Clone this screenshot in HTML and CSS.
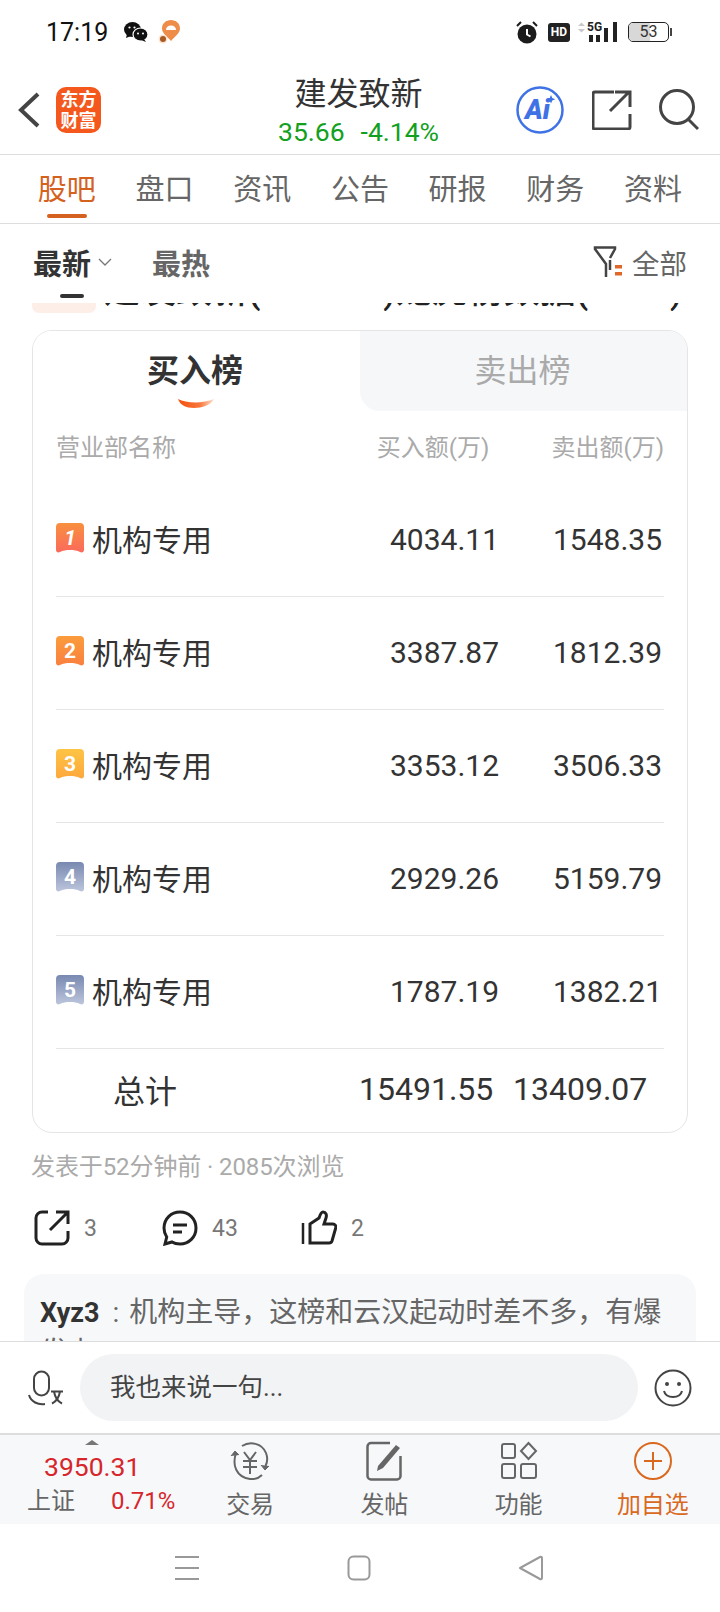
FILE: index.html
```html
<!DOCTYPE html>
<html lang="zh-CN">
<head>
    <meta charset="UTF-8">
    <meta name="viewport" content="width=device-width, initial-scale=1.0">
    <title>建发致新 - 股吧</title>
    <link rel="stylesheet" href="styles.css">
</head>
<body>
    <svg class="defs" width="0" height="0">
        <defs>
            <linearGradient id="rank1" x1="0" y1="0" x2="0" y2="1"><stop offset="0" stop-color="#f8903e"/><stop offset="1" stop-color="#fb6a5c"/></linearGradient>
            <linearGradient id="rank2" x1="0" y1="0" x2="0" y2="1"><stop offset="0" stop-color="#fb9c3c"/><stop offset="1" stop-color="#f9803f"/></linearGradient>
            <linearGradient id="rank3" x1="0" y1="0" x2="0" y2="1"><stop offset="0" stop-color="#fdc445"/><stop offset="1" stop-color="#fda83c"/></linearGradient>
            <linearGradient id="rank4" x1="0" y1="0" x2="0" y2="1"><stop offset="0" stop-color="#7888b0"/><stop offset="1" stop-color="#bcc5dc"/></linearGradient>
            <linearGradient id="smile" x1="0" y1="0" x2="1" y2="0"><stop offset="0" stop-color="#f4500c"/><stop offset="0.6" stop-color="#f8763a"/><stop offset="1" stop-color="#ffe0cc"/></linearGradient>
            <path id="ribbon" d="M4 0H24a4 4 0 0 1 4 4V27c0 2-2 3-4 2-3-1.5-6-2-10-2s-7 .5-10 2c-2 1-4 0-4-2V4a4 4 0 0 1 4-4z"/>
        </defs>
    </svg>

    <div class="status-bar">
        <span class="clock">17:19</span>
        <svg class="st-wechat" width="24" height="20" viewBox="0 0 24 20">
            <ellipse cx="8.500" cy="7.500" rx="8.500" ry="7.500" fill="#111"/>
            <path d="M3 12l-1 4 5-2z" fill="#111"/>
            <ellipse cx="16.500" cy="12.500" rx="7.500" ry="6.500" fill="#111" stroke="#fff" stroke-width="1.200"/>
            <path d="M20 17l2 3-5-2z" fill="#111"/>
            <circle cx="5.500" cy="5.500" r="1.100" fill="#fff"/>
            <circle cx="10.500" cy="5.500" r="1.100" fill="#fff"/>
            <circle cx="14" cy="11.500" r="1" fill="#fff"/>
            <circle cx="19" cy="11.500" r="1" fill="#fff"/>
        </svg>
        <svg class="st-map" width="22" height="24" viewBox="0 0 22 24">
            <path d="M13 0c5 0 9 3.500 9 8.500 0 4.500-5 8-9 12.500-4-4.500-9-8-9-12.500C4 3.500 8 0 13 0z" fill="#ee8c4a"/>
            <path d="M8 10c0-3 2-4.500 5-4.500s5 1.500 5 4.500z" fill="#fff"/>
            <circle cx="5" cy="19" r="4.500" fill="#fbe3d2"/>
            <circle cx="5" cy="19" r="3" fill="#a85a24"/>
        </svg>
        <span class="status-space"></span>
        <svg class="st-alarm" width="22" height="23" viewBox="0 0 22 23">
            <circle cx="11" cy="13" r="9.500" fill="#1c1c1c"/>
            <path d="M11 8v5.500l3.500 2" fill="none" stroke="#fff" stroke-width="2"/>
            <path d="M1 5l4-4M21 5l-4-4" stroke="#1c1c1c" stroke-width="2"/>
        </svg>
        <span class="st-hd">HD</span>
        <svg class="st-signal" width="40" height="24" viewBox="0 0 40 24">
            <path d="M0 6l3.500-3.500L7 6zM0 9l3.500 3.500L7 9z" fill="#c8c8c8"/>
            <text x="9" y="11" class="st-5g">5G</text>
            <rect x="11" y="15" width="4" height="7" fill="#222"/>
            <rect x="18" y="15" width="4" height="7" fill="#222"/>
            <rect x="26" y="8" width="4" height="14" fill="#222"/>
            <rect x="35" y="2" width="4" height="20" fill="#222"/>
        </svg>
        <div class="st-battery"><span class="st-level"></span><span class="st-num">53</span></div>
        <span class="st-cap"></span>
    </div>

    <header class="top-bar">
        <div class="top-left">
            <svg width="22" height="36" viewBox="0 0 22 36"><path d="M20 2L3 18l17 16" fill="none" stroke="#444" stroke-width="4"/></svg>
            <div class="app-logo">东方<br>财富</div>
        </div>
        <div class="top-title">
            <div class="stock-name">建发致新</div>
            <div class="stock-price"><span>35.66</span><span>-4.14%</span></div>
        </div>
        <div class="top-right">
            <svg width="50" height="50" viewBox="0 0 50 50">
                <circle cx="25" cy="25" r="22.500" fill="none" stroke="#3f72e4" stroke-width="2.500"/>
                <text x="10" y="34" class="ai-text">Ai</text>
                <path d="M36 10l1.300 3 3 1.300-3 1.300-1.300 3-1.300-3-3-1.300 3-1.300z" fill="#3f72e4"/>
            </svg>
            <svg width="40" height="40" viewBox="0 0 40 40">
                <path d="M22 2H3a2 2 0 0 0-2 2V37a2 2 0 0 0 2 2H36a2 2 0 0 0 2-2V24" fill="none" stroke="#444" stroke-width="3"/>
                <path d="M18 21L37 2M23 2H38V17" fill="none" stroke="#444" stroke-width="3"/>
            </svg>
            <svg width="40" height="42" viewBox="0 0 40 42">
                <circle cx="18" cy="18" r="16.500" fill="none" stroke="#444" stroke-width="3"/>
                <path d="M29 30l10 10" stroke="#444" stroke-width="3"/>
            </svg>
        </div>
    </header>

    <nav class="tabs">
        <a class="tab active">股吧</a>
        <a class="tab">盘口</a>
        <a class="tab">资讯</a>
        <a class="tab">公告</a>
        <a class="tab">研报</a>
        <a class="tab">财务</a>
        <a class="tab">资料</a>
    </nav>

    <div class="sort-bar">
        <span class="sort-item current">最新</span>
        <svg class="sort-arrow" width="14" height="8" viewBox="0 0 14 8"><path d="M1 1l6 6 6-6" fill="none" stroke="#777" stroke-width="1.300"/></svg>
        <span class="sort-item">最热</span>
        <span class="sort-space"></span>
        <svg width="30" height="32" viewBox="0 0 30 32">
            <path d="M13 31V18L2 3V1.500H22V3L17 12" fill="none" stroke="#444" stroke-width="2.500"/>
            <path d="M17 24V14" stroke="#444" stroke-width="2.500"/>
            <rect x="22" y="19" width="7" height="3.500" fill="#e0662a"/>
            <rect x="22" y="26" width="7" height="3.500" fill="#e0662a"/>
        </svg>
        <span class="sort-all">全部</span>
    </div>

    <main class="feed">
        <div class="clip-strip">
            <span class="clip-dash"></span>
            <div class="clip-row">
                <span class="clip-tag"></span>
                <div class="clip-text"><span>建发致新(301584)龙虎榜数据(1017)</span></div>
            </div>
        </div>

        <section class="board">
            <div class="board-tabs">
                <div class="board-tab on">
                    买入榜
                    <svg class="board-smile" width="36" height="10" viewBox="0 0 36 10"><path d="M0 1C8 5 24 6 36 1 33 7 24 10 16 10 8 10 2 7 0 1z" fill="url(#smile)"/></svg>
                </div>
                <div class="board-tab off">卖出榜</div>
            </div>
            <div class="board-head">
                <span class="head-name">营业部名称</span>
                <span>买入额(万)</span>
                <span>卖出额(万)</span>
            </div>

            <div class="rank-row">
                <div class="rank-name">
                    <svg class="rank-badge" width="28" height="30" viewBox="0 0 28 30"><use href="#ribbon" fill="url(#rank1)"/><text x="14" y="22" class="badge-num italic">1</text></svg>
                    机构专用
                </div>
                <span>4034.11</span>
                <span>1548.35</span>
            </div>
            <div class="rank-row">
                <div class="rank-name">
                    <svg class="rank-badge" width="28" height="30" viewBox="0 0 28 30"><use href="#ribbon" fill="url(#rank2)"/><text x="14" y="22" class="badge-num">2</text></svg>
                    机构专用
                </div>
                <span>3387.87</span>
                <span>1812.39</span>
            </div>
            <div class="rank-row">
                <div class="rank-name">
                    <svg class="rank-badge" width="28" height="30" viewBox="0 0 28 30"><use href="#ribbon" fill="url(#rank3)"/><text x="14" y="22" class="badge-num">3</text></svg>
                    机构专用
                </div>
                <span>3353.12</span>
                <span>3506.33</span>
            </div>
            <div class="rank-row">
                <div class="rank-name">
                    <svg class="rank-badge" width="28" height="30" viewBox="0 0 28 30"><use href="#ribbon" fill="url(#rank4)"/><text x="14" y="22" class="badge-num">4</text></svg>
                    机构专用
                </div>
                <span>2929.26</span>
                <span>5159.79</span>
            </div>
            <div class="rank-row">
                <div class="rank-name">
                    <svg class="rank-badge" width="28" height="30" viewBox="0 0 28 30"><use href="#ribbon" fill="url(#rank4)"/><text x="14" y="22" class="badge-num">5</text></svg>
                    机构专用
                </div>
                <span>1787.19</span>
                <span>1382.21</span>
            </div>
            <div class="total-row">
                <span class="total-label">总计</span>
                <span>15491.55</span>
                <span>13409.07</span>
            </div>
        </section>

        <p class="post-meta">发表于52分钟前 · 2085次浏览</p>

        <div class="post-actions">
            <div class="action a-share">
                <svg width="36" height="36" viewBox="0 0 36 36">
                    <path d="M14 2H8a6 6 0 0 0-6 6V28a6 6 0 0 0 6 6H28a6 6 0 0 0 6-6V21" fill="none" stroke="#222" stroke-width="3"/>
                    <path d="M16 20L33 3M22 2H34V14" fill="none" stroke="#222" stroke-width="3"/>
                </svg>
                <span>3</span>
            </div>
            <div class="action a-comment">
                <svg width="36" height="36" viewBox="0 0 36 36">
                    <path d="M18 2c9 0 16 7 16 16s-7 16-16 16c-3 0-6-.7-8-2L3 34l1.700-7C3 24.500 2 21.500 2 18 2 9 9 2 18 2z" fill="none" stroke="#222" stroke-width="3"/>
                    <path d="M11 15H25M11 22H20" stroke="#222" stroke-width="3"/>
                </svg>
                <span>43</span>
            </div>
            <div class="action a-like">
                <svg width="36" height="36" viewBox="0 0 36 36">
                    <path d="M2 13V34" stroke="#222" stroke-width="2.500"/>
                    <path d="M9 14L18 8c1-3 2-6 4-6 3 0 4 3 3 6l-2 6h9c2 0 3 2 3 3l-4 14c-.5 1.500-1.500 2-3 2H9z" fill="none" stroke="#222" stroke-width="3"/>
                </svg>
                <span>2</span>
            </div>
        </div>

        <div class="comment-box">
            <b>Xyz3</b><span class="colon">:</span>机构主导，这榜和云汉起动时差不多，有爆发力
        </div>
    </main>

    <div class="input-bar">
        <svg width="36" height="36" viewBox="0 0 36 36">
            <rect x="6" y="1.500" width="15" height="24" rx="7.500" fill="none" stroke="#444" stroke-width="2"/>
            <path d="M1 25c2 7 9 10 16 9" fill="none" stroke="#444" stroke-width="2"/>
            <path d="M23 21.500H35M26 21.500c1 6 4 10 8 12M32 21.500c-1 6-4 10-8 12" fill="none" stroke="#444" stroke-width="2"/>
        </svg>
        <div class="input-pill">我也来说一句...</div>
        <svg width="38" height="38" viewBox="0 0 38 38">
            <circle cx="19" cy="19" r="17.500" fill="none" stroke="#444" stroke-width="2"/>
            <circle cx="13" cy="15" r="2" fill="#444"/>
            <circle cx="25" cy="15" r="2" fill="#444"/>
            <path d="M10 22c2 8 16 8 18 0" fill="none" stroke="#444" stroke-width="2"/>
        </svg>
    </div>

    <div class="bottom-nav">
        <div class="index-box">
            <span class="index-up"></span>
            <div class="index-value">3950.31</div>
            <div class="index-line"><span>上证</span><span class="index-pct">0.71%</span></div>
        </div>
        <div class="nav-item">
            <svg width="44" height="40" viewBox="0 0 44 40">
                <path d="M8 12C4 24 8 36 22 38c5 .5 9-1 12-4M14 5c8-5 20-3 24 7 2 5 1 10-.5 13" fill="none" stroke="#666" stroke-width="2"/>
                <path d="M3 15l4-5 4 4M33 24l4 5 4-4" fill="#666" stroke="#666" stroke-width="1"/>
                <path d="M16 11l6 8 6-8M15 20H29M15 26H29M22 19V33" fill="none" stroke="#666" stroke-width="2"/>
            </svg>
            <span>交易</span>
        </div>
        <div class="nav-item">
            <svg width="40" height="40" viewBox="0 0 40 40">
                <path d="M26 2H7a3.500 3.500 0 0 0-3.500 3.500V35a3.500 3.500 0 0 0 3.500 3.500H33a3.500 3.500 0 0 0 3.500-3.500V15" fill="none" stroke="#666" stroke-width="2.500"/>
                <path d="M14 25L32 4l4 3-17 20-6 3z" fill="#666"/>
            </svg>
            <span>发帖</span>
        </div>
        <div class="nav-item">
            <svg width="38" height="40" viewBox="0 0 38 38">
                <rect x="2" y="2" width="13" height="14" rx="2" fill="none" stroke="#666" stroke-width="2"/>
                <rect x="2" y="22" width="13" height="14" rx="2" fill="none" stroke="#666" stroke-width="2"/>
                <rect x="21" y="22" width="15" height="14" rx="2" fill="none" stroke="#666" stroke-width="2"/>
                <path d="M28.500 1L36 9l-7.500 8L21 9z" fill="none" stroke="#666" stroke-width="2"/>
            </svg>
            <span>功能</span>
        </div>
        <div class="nav-item add">
            <svg width="40" height="40" viewBox="0 0 40 40">
                <circle cx="20" cy="20" r="18" fill="none" stroke="#d9691f" stroke-width="2"/>
                <path d="M20 11V29M11 20H29" stroke="#d9691f" stroke-width="2"/>
            </svg>
            <span>加自选</span>
        </div>
    </div>

    <div class="system-nav">
        <svg width="26" height="26" viewBox="0 0 26 26"><path d="M1 2H25M1 13H25M1 24H25" stroke="#999" stroke-width="2"/></svg>
        <svg width="24" height="26" viewBox="0 0 24 26"><rect x="1.500" y="1.500" width="21" height="23" rx="5" fill="none" stroke="#999" stroke-width="2"/></svg>
        <svg width="26" height="26" viewBox="0 0 26 26"><path d="M2 13L22 2c1-.5 2 0 2 1V23c0 1-1 1.500-2 1z" fill="none" stroke="#999" stroke-width="2" stroke-linejoin="round"/></svg>
    </div>
</body>
</html>
```

FILE: styles.css
```css
* {
    box-sizing: border-box;
}

html, body {
    margin: 0;
    height: 1612px;
    overflow: hidden;
}

body {
    display: flex;
    flex-direction: column;
    width: 720px;
    font-family: Roboto, "Noto Sans CJK SC", sans-serif;
    background-color: #fff;
    color: #333;
}

.defs {
    position: absolute;
}

/* status bar */
.status-bar {
    display: flex;
    align-items: center;
    flex: 0 0 64px;
    padding-left: 46px;
    padding-right: 48px;
    color: #111;
}

.clock {
    font-size: 25px;
    width: 78px;
}

.st-map {
    margin-left: 10px;
}

.status-space {
    flex: 1;
}

.st-hd {
    width: 22px;
    height: 19px;
    margin-left: 10px;
    border-radius: 3px;
    background-color: #222;
    color: #fff;
    font-size: 12px;
    font-weight: 700;
    line-height: 19px;
    text-align: center;
}

.st-signal {
    margin-left: 8px;
}

.st-5g {
    font-size: 12px;
    font-weight: 700;
    fill: #222;
}

.st-battery {
    position: relative;
    width: 41px;
    height: 20px;
    margin-left: 10px;
    border: 1.500px solid #222;
    border-radius: 5px;
    overflow: hidden;
}

.st-level {
    display: block;
    width: 53%;
    height: 100%;
    background-color: #d8d8d8;
}

.st-num {
    position: absolute;
    inset: 0;
    font-size: 16px;
    line-height: 18px;
    text-align: center;
    color: #333;
}

.st-cap {
    width: 2px;
    height: 8px;
    margin-left: 1px;
    background-color: #444;
}

/* header */
.top-bar {
    display: grid;
    grid-template-columns: 1fr auto 1fr;
    flex: 0 0 91px;
    padding-left: 18px;
    padding-right: 21px;
    border-bottom: 1px solid #ddd;
}

.top-left {
    display: flex;
    align-items: center;
    gap: 16px;
    padding-bottom: 2px;
    padding-top: 4px;
}

.app-logo {
    width: 45px;
    height: 46px;
    padding-top: 2px;
    border-radius: 10px;
    background-color: #f4581c;
    color: #fff;
    font-size: 18px;
    font-weight: 700;
    line-height: 21px;
    text-align: center;
}

.top-title {
    padding-top: 11px;
    text-align: center;
}

.stock-name {
    font-size: 32px;
    line-height: 38px;
    color: #333;
}

.stock-price {
    display: flex;
    justify-content: center;
    gap: 16px;
    font-size: 26.500px;
    line-height: 38px;
    color: #13a01e;
}

.top-right {
    display: flex;
    align-items: center;
    justify-content: flex-end;
    gap: 27px;
    padding-top: 2px;
}

.ai-text {
    font-size: 27px;
    font-weight: 900;
    font-style: italic;
    fill: #3f72e4;
}

/* tabs */
.tabs {
    display: flex;
    flex: 0 0 68px;
    padding-left: 18px;
    border-bottom: 1px solid #ddd;
}

.tab {
    position: relative;
    width: 97.700px;
    padding-top: 2px;
    font-size: 29px;
    line-height: 66px;
    text-align: center;
    color: #666;
}

.tab.active {
    color: #d4621e;
}

.tab.active::after {
    content: "";
    position: absolute;
    left: 29px;
    bottom: 5px;
    width: 40px;
    height: 4px;
    border-radius: 2px;
    background-color: #d4621e;
}

/* sort row */
.sort-bar {
    display: flex;
    align-items: center;
    flex: 0 0 67px;
    padding: 9px 33px 0 33px;
}

.sort-item {
    font-size: 29px;
    font-weight: 700;
    color: #666;
}

.sort-item.current {
    color: #333;
}

.sort-arrow {
    margin-left: 7px;
    margin-right: 40px;
}

.sort-space {
    flex: 1;
}

.sort-all {
    margin-left: 9px;
    font-size: 27.500px;
    color: #666;
}

/* scrolling content */
.feed {
    flex: 1;
    overflow: hidden;
    min-height: 0;
}

.clip-strip {
    height: 39px;
    padding-top: 3px;
}

.clip-dash {
    display: block;
    width: 24px;
    height: 4px;
    margin-left: 60px;
    border-radius: 2px;
    background-color: #333;
}

.clip-row {
    display: flex;
    gap: 8px;
    margin-top: 5px;
    padding-left: 32px;
}

.clip-tag {
    width: 64px;
    height: 10px;
    border-radius: 0 0 7px 7px;
    background-color: #fdeee8;
}

.clip-text {
    height: 8px;
    overflow: hidden;
    font-size: 36px;
    font-weight: 500;
    line-height: 36px;
    white-space: pre;
    color: #222;
}

.clip-text span {
    display: block;
    margin-top: -30px;
}

/* buy / sell board */
.board {
    margin: 0 32px;
    border: 1px solid #e5e5e5;
    border-radius: 20px;
    overflow: hidden;
}

.board-tabs {
    display: flex;
    height: 80px;
    background-color: #f6f7f9;
}

.board-tab {
    flex: 1;
    padding-top: 1px;
    font-size: 32px;
    line-height: 79px;
    text-align: center;
}

.board-tab.on {
    position: relative;
    flex: 0 0 327px;
    padding-right: 3px;
    border-radius: 0 20px 0 0;
    background-color: #fff;
    font-weight: 700;
    color: #333;
}

.board-tab.off {
    padding-right: 2px;
    border-radius: 0 0 0 20px;
    background-color: #f6f7f9;
    color: #aaa;
    box-shadow: -20px 0 0 #fff;
}

.board-smile {
    position: absolute;
    left: 145px;
    top: 67px;
}

.board-head {
    display: flex;
    align-items: center;
    gap: 62px;
    height: 73px;
    margin: 0 23px;
    padding-bottom: 4px;
    font-size: 24px;
    color: #aaa;
}

.head-name {
    flex: 1;
}

.rank-row {
    display: grid;
    grid-template-columns: 334px 163px 1fr;
    align-items: center;
    height: 113px;
    margin: 0 23px;
    padding-bottom: 2px;
    border-bottom: 1px solid #e6e6e6;
    font-size: 30px;
    color: #333;
}

.rank-name {
    display: flex;
    align-items: center;
    gap: 8px;
    padding-bottom: 2px;
    font-size: 30px;
}

.badge-num {
    font-size: 21px;
    font-weight: 700;
    fill: #fff;
    text-anchor: middle;
}

.badge-num.italic {
    font-style: italic;
}

.total-row {
    display: grid;
    grid-template-columns: 303px 154px 1fr;
    align-items: center;
    height: 83px;
    margin: 0 23px;
    padding-bottom: 4px;
    font-size: 32px;
    color: #333;
}

.total-label {
    padding-left: 57px;
}

.post-meta {
    margin: 17px 0 0 31px;
    font-size: 24px;
    line-height: 34px;
    letter-spacing: -0.100px;
    color: #aaa;
}

.post-actions {
    display: flex;
    height: 44px;
    margin-top: 22px;
}

.action {
    display: flex;
    align-items: center;
    gap: 14px;
    font-size: 23px;
    color: #777;
}

.a-share {
    width: 128px;
    margin-left: 34px;
}

.a-comment {
    width: 139px;
}

.comment-box {
    margin: 24px 24px 0;
    padding: 19px 30px 0 16px;
    border-radius: 20px;
    background-color: #f7f8fa;
    font-size: 28px;
    line-height: 40px;
    color: #666;
    height: 120px;
}

.comment-box b {
    font-size: 27px;
    font-weight: 700;
    color: #333;
}

.colon {
    margin: 0 10px 0 13px;
}

/* reply bar */
.input-bar {
    display: flex;
    align-items: center;
    flex: 0 0 92px;
    padding: 0 28px 0 28px;
    border-top: 1px solid #ddd;
    background-color: #fff;
    gap: 16px;
}

.input-pill {
    flex: 1;
    height: 67px;
    padding-left: 30px;
    border-radius: 34px;
    background-color: #f2f3f5;
    font-size: 25.500px;
    line-height: 67px;
    color: #444;
}

/* bottom nav */
.bottom-nav {
    display: flex;
    flex: 0 0 91px;
    border-top: 2px solid #ddd;
    background-color: #f7f8fa;
}

.index-box {
    position: relative;
    width: 183px;
    padding-left: 27px;
    padding-top: 12px;
}

.index-up {
    display: block;
    position: absolute;
    left: 85px;
    top: 5px;
    width: 0;
    height: 0;
    border-left: 7px solid transparent;
    border-right: 7px solid transparent;
    border-bottom: 5px solid #777;
}

.index-value {
    margin-left: 17px;
    font-size: 26.500px;
    line-height: 40px;
    color: #d6262c;
}

.index-line {
    display: flex;
    font-size: 24px;
    line-height: 28px;
    color: #666;
}

.index-pct {
    margin-left: 36px;
    color: #d6262c;
}

.nav-item {
    display: flex;
    flex-direction: column;
    align-items: center;
    flex: 1;
    padding-top: 6px;
    font-size: 24px;
    line-height: 30px;
    color: #666;
}

.nav-item svg {
    margin-bottom: 9px;
}

.nav-item.add {
    color: #d9691f;
}

/* android nav */
.system-nav {
    display: flex;
    align-items: center;
    flex: 0 0 88px;
    padding: 0 176px 0 174px;
    justify-content: space-between;
    background-color: #fff;
}
```
